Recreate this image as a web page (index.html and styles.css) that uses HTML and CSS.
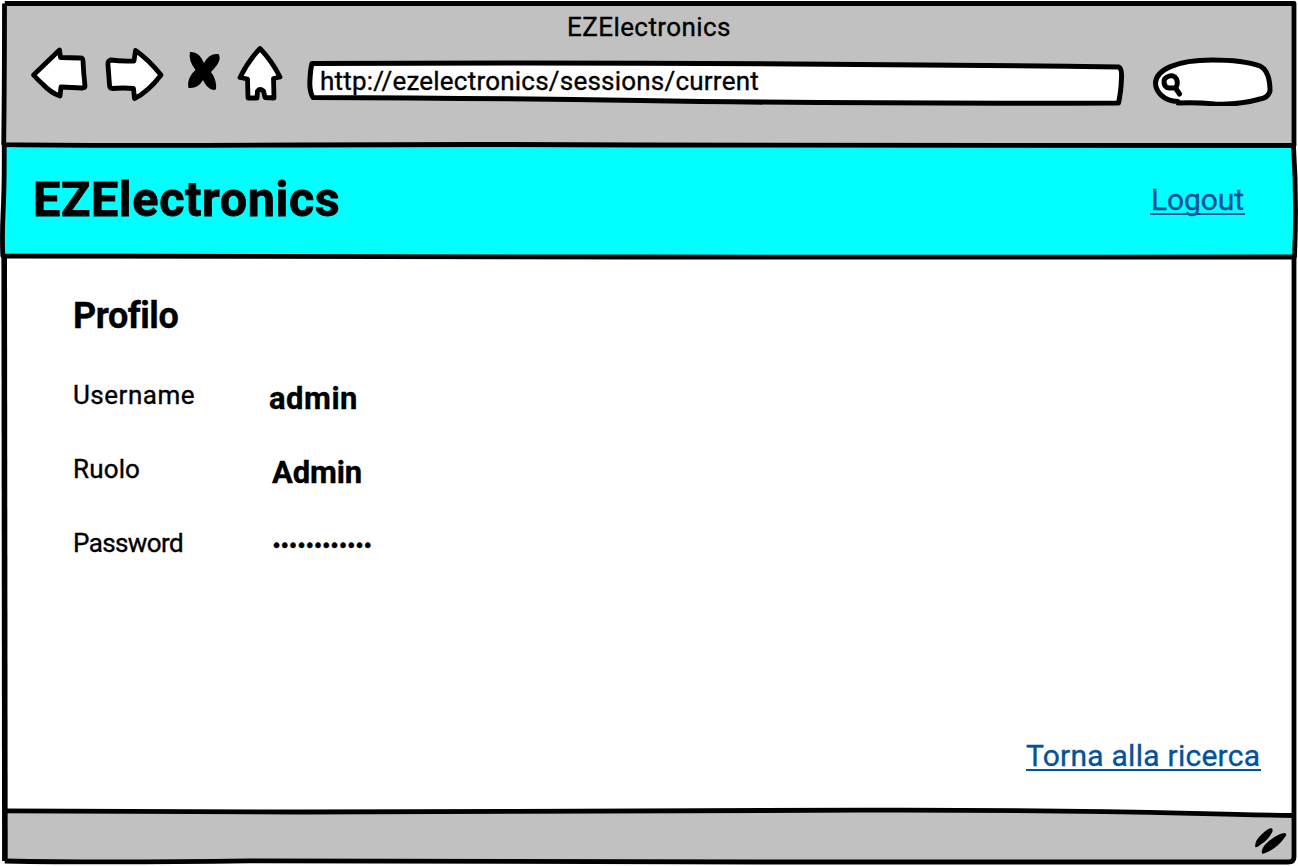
FILE: index.html
```html
<!DOCTYPE html>
<html lang="it">
<head>
<meta charset="utf-8">
<title>EZElectronics</title>
<link rel="stylesheet" href="styles.css">
</head>
<body>
<div class="window">
  <svg class="frame" viewBox="0 0 1298 866" aria-hidden="true">
    <path class="grey" d="M4.500 3.500H1294V145H4Z"/>
    <path class="grey" d="M4.500 811C80 812 180 812 300 812C500 812 650 810 860 810C1080 809.500 1180 812.500 1294 815.500V862C1150 863 1000 862 800 862C550 861 400 859 250 860.500C150 861.500 80 862 5 861Z"/>
    <path class="cyan" d="M4 145Q300 146.500 650 145.500T1293 146Q1297 200 1294 257Q900 258 700 257.500Q350 258 3.500 256Q1 225 4 145Z"/>
    <path class="ink" d="M4.800 3.500H1294V146M4.500 3.500Q4.500 80 3.700 145M4 144.700Q120 146 300 145T640 145T1294 145.500"/>
    <path class="ink" d="M4.200 145Q4.500 185 3 215Q2 235 2.800 256C200 257 400 257.500 640 257C900 256.500 1080 257.500 1294.500 257Q1297 200 1293.500 146"/>
    <path class="ink left" d="M4.200 258Q4 600 4.900 861"/>
    <path class="ink" d="M4.700 861C80 862.500 170 862 250 860.800C380 859.500 520 861 760 862H1288Q1294 862 1294 857V258M5 810.800C80 812 180 812 300 812C500 812 620 810 860 810.200C1100 809.500 1150 813 1294 815.500"/>
    <path class="black" d="M1255.200 847C1255 841 1258 838 1262 834Q1268 828 1271.500 828.200Q1273.500 829 1272 832.500Q1268 840 1262 843.500Q1257 848 1255.200 847ZM1261.800 853C1261.500 848 1265 844 1271 839.500Q1280 832.500 1285 833Q1287.500 834 1285 837C1279 846 1272 850.500 1264 853.500Q1262 854 1261.800 853Z"/>
  </svg>

  <header class="browser">
    <div class="browser-title"><span>EZElectronics</span></div>
    <div class="toolbar">
      <svg class="back" viewBox="30 44 60 60"><path class="icon" d="M33.500 75L59.500 50L60.500 57.500L80 58Q83 57.500 83 61Q83.500 73 85 86Q85 88 82 88L61 87L60 96Q51 93 42.500 84Q38 80 33.500 75Z"/></svg>
      <svg class="forward" viewBox="104 44 60 60"><path class="icon" d="M110.500 60Q121 61.500 134 61L135.500 50.500Q148 59 161 75Q148 92 134.500 98.500L133.500 88.500Q123 87.500 112 88.500Q109.500 88 109.500 85L108 65Q107.500 61 110.500 60Z"/></svg>
      <svg class="stop" viewBox="186 44 36 60"><path class="black" d="M190 52Q199 51 204 63Q209 53 218.500 54Q221.500 58 217 65Q214 69 211 72Q217 80 216 89Q215 90.500 211.500 89.500Q206 87 203 80Q198 89 188.500 88Q187 82 190.500 76Q193 72 195.500 70Q188 60 190 52Z"/></svg>
      <svg class="home" viewBox="236 44 48 60"><path class="icon" d="M260 48.500Q272 61 280 77L273.500 78.500L274 98L265 97.500L263.500 91Q260 88 257.500 91L257 98L248 98L247.500 79L240 77.500Q248 61 260 48.500Z"/></svg>
      <div class="address">
        <svg class="outline" viewBox="305 58 822 50" aria-hidden="true"><path class="icon wide" d="M312 63.500Q700 61.500 1118.500 67Q1122 68 1121.500 78Q1121 92 1118.500 103Q850 104 640 100.500Q470 98 313 97.500Q309 91 310 79Q310.500 69 312 63.500Z"/></svg>
        <span>http://ezelectronics/sessions/current</span>
      </div>
      <svg class="search" viewBox="1151 56 124 50"><path class="icon wide" d="M1178 101.500C1163 101 1155.500 91 1155.500 83C1156 70 1176 60 1212 60C1237 60 1249 62 1260 66Q1270 71 1270 91Q1268 98 1260 99Q1240 105 1215 104Q1195 102 1178 103"/><path class="icon wide" d="M1176 88H1169C1163 87 1162.500 79 1167 77C1171 74.500 1175 76 1176.500 79Q1178.500 84 1175.500 88L1179.500 94"/></svg>
    </div>
  </header>

  <div class="banner">
    <h1>EZElectronics</h1>
    <a class="link logout" href="#">Logout</a>
  </div>

  <main class="content">
    <h2>Profilo</h2>
    <dl class="profile">
      <dt class="username">Username</dt><dd class="name">admin</dd>
      <dt class="role">Ruolo</dt><dd class="role-value">Admin</dd>
      <dt class="pass">Password</dt><dd class="dots">••••••••••••</dd>
    </dl>
    <a class="link return" href="#">Torna alla ricerca</a>
  </main>
  <footer class="status"></footer>
</div>
</body>
</html>
```
FILE: styles.css
```css
* { box-sizing: border-box; margin: 0; }
body { background: #fff; color: #000; font-family: Roboto, "Liberation Sans", sans-serif; overflow: hidden; }
.window { position: relative; width: 1298px; height: 866px; display: flex; flex-direction: column; -webkit-text-stroke: .35px; }
.frame { position: absolute; inset: 0; width: 1298px; height: 866px; z-index: -1; }
svg { display: block; flex: none; }
.grey { fill: #c1c1c1; }
.cyan { fill: #0ff; }
.black { fill: #000; }
.ink { fill: none; stroke: #000; stroke-width: 4.8; stroke-linejoin: round; }
.left { stroke-width: 5.6; }
.icon { fill: #fff; stroke: #000; stroke-width: 4.8; stroke-linejoin: round; stroke-linecap: round; }
.wide { stroke-width: 5; }

.browser { height: 145px; padding-top: 12px; }
.browser-title { height: 32px; line-height: 30px; font-size: 26px; text-align: center; letter-spacing: .42px; }
.toolbar { display: flex; padding-left: 30px; }
.back, .forward { width: 60px; height: 60px; }
.forward { margin-left: 14px; }
.stop { width: 36px; height: 60px; margin-left: 22px; }
.home { width: 48px; height: 60px; margin-left: 14px; }
.address { position: relative; width: 822px; height: 50px; margin: 14px 0 0 21px; padding: 8px 0 0 15px; font-size: 26px; line-height: 30px; letter-spacing: .22px; }
.address span { position: relative; }
.outline { position: absolute; inset: 0; width: 822px; height: 50px; }
.search { width: 124px; height: 50px; margin: 12px 0 0 24px; }

.banner { height: 112px; display: flex; justify-content: space-between; padding: 25px 53px 0 33px; }
h1 { font-size: 48.500px; line-height: 60px; font-weight: 700; letter-spacing: .62px; -webkit-text-stroke: .8px; }
.link { color: #045299; font-size: 30px; line-height: 34px; text-decoration: none; border-bottom: 2px solid #045299; height: 34px; }
.logout { margin-top: 11px; width: 95px; padding-left: 1px; white-space: nowrap; line-height: 37px; letter-spacing: -.1px; }

.content { height: 554px; padding: 39px 37px 0 73px; display: flex; flex-direction: column; }
h2 { font-size: 36px; line-height: 40px; font-weight: 700; letter-spacing: -.45px; font-variant-ligatures: none; }
.profile { display: grid; grid-template-columns: 196px 300px; grid-auto-rows: 74px; margin-top: 43px; }
dt { font-size: 26px; line-height: 32px; }
dd { font-size: 31px; line-height: 40px; font-weight: 700; }
.username { letter-spacing: .5px; }
.role { letter-spacing: .15px; }
.pass { letter-spacing: -.6px; }
.name { letter-spacing: .5px; }
.role-value { padding-left: 3px; letter-spacing: -.15px; }
.dots { padding-left: 4px; font-family: "Liberation Sans", sans-serif; font-size: 20px; line-height: 36px; font-weight: 400; letter-spacing: 1.3px; }
.return { align-self: flex-end; width: 235px; white-space: nowrap; margin-top: 136px; line-height: 37px; letter-spacing: .25px; }
.status { flex: 1; }
```
